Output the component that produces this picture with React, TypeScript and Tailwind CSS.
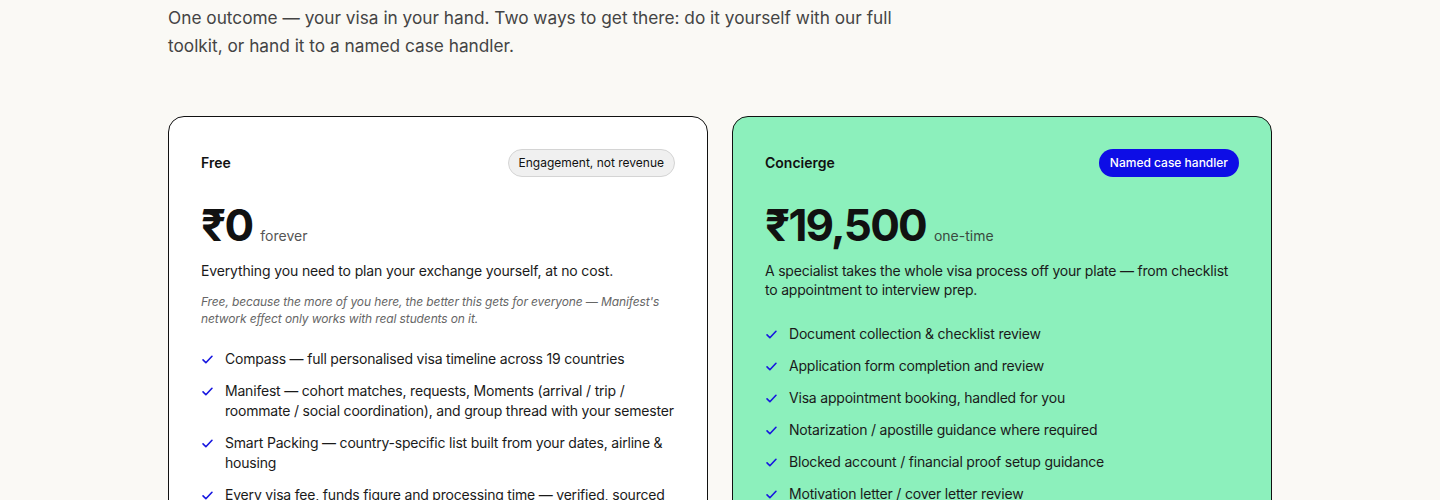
import React from "react";

const Check = () => (
  <svg
    viewBox="0 0 16 16"
    className="mt-[4px] h-[13px] w-[13px] shrink-0 text-[#1717e0]"
    fill="none"
    stroke="currentColor"
    strokeWidth={2}
    strokeLinecap="round"
    strokeLinejoin="round"
  >
    <path d="M2.5 8.5l3.5 3.5 7.5-8" />
  </svg>
);

const Feature = ({ children }: { children: React.ReactNode }) => (
  <li className="flex gap-[11px] text-[14px] leading-[20px] tracking-[-0.014em] text-[#1a1a1a]">
    <Check />
    <span>{children}</span>
  </li>
);

const App = () => {
  return (
    <div className="min-h-[500px] bg-[#faf9f5] font-['Inter',sans-serif] text-[#111]">
      <div className="mx-auto w-[1104px] pt-[4px]">
        <p className="max-w-[740px] text-[17.25px] leading-[28px] text-[#444]">
          One outcome — your visa in your hand. Two ways to get there: do it
          yourself with our full toolkit, or hand it to a named case handler.
        </p>

        <div className="mt-[56px] grid grid-cols-2 gap-6">
          {/* Free */}
          <div className="rounded-2xl border border-[#111] bg-white px-8 pt-8 pb-10">
            <div className="flex items-center justify-between">
              <h3 className="-mt-[1px] text-[14px] font-semibold">Free</h3>
              <span className="rounded-full border border-[#d4d4d4] bg-[#f0f0f0] px-[10px] py-[5px] text-[12px] leading-[16px]">
                Engagement, not revenue
              </span>
            </div>
            <div className="mt-[22px] flex items-baseline gap-2">
              <span className="text-[44px] leading-[52px] font-bold tracking-[-0.04em]">
                ₹0
              </span>
              <span className="text-[14px] text-[#555]">forever</span>
            </div>
            <p className="mt-[10px] text-[14px] leading-[20px] tracking-[-0.01em] text-[#1a1a1a]">
              Everything you need to plan your exchange yourself, at no cost.
            </p>
            <p className="mt-[12px] text-[12px] italic leading-[17px] tracking-[-0.01em] text-[#666]">
              Free, because the more of you here, the better this gets for
              everyone — Manifest's network effect only works with real students
              on it.
            </p>
            <ul className="mt-[22px] flex flex-col gap-3">
              <Feature>
                Compass — full personalised visa timeline across 19 countries
              </Feature>
              <Feature>
                Manifest — cohort matches, requests, Moments (arrival / trip /
                roommate / social coordination), and group thread with your
                semester
              </Feature>
              <Feature>
                Smart Packing — country-specific list built from your dates,
                airline &amp; housing
              </Feature>
              <Feature>
                Every visa fee, funds figure and processing time — verified,
                sourced
              </Feature>
            </ul>
          </div>

          {/* Concierge */}
          <div className="rounded-2xl border border-[#111] bg-[#8cf0bc] px-8 pt-8 pb-10">
            <div className="flex items-center justify-between">
              <h3 className="-mt-[1px] text-[14px] font-semibold">Concierge</h3>
              <span className="rounded-full bg-[#0d0de6] px-[11px] py-[6px] text-[12px] leading-[16px] font-medium text-white">
                Named case handler
              </span>
            </div>
            <div className="mt-[22px] flex items-baseline gap-2">
              <span className="text-[44px] leading-[52px] font-bold tracking-[-0.04em]">
                ₹19,500
              </span>
              <span className="text-[14px] text-[#3a4a40]">one-time</span>
            </div>
            <p className="mt-[10px] text-[14px] leading-[19px] tracking-[-0.015em] text-[#1a1a1a]">
              A specialist takes the whole visa process off your plate — from
              checklist to appointment to interview prep.
            </p>
            <ul className="mt-[25px] flex flex-col gap-3">
              <Feature>Document collection &amp; checklist review</Feature>
              <Feature>Application form completion and review</Feature>
              <Feature>Visa appointment booking, handled for you</Feature>
              <Feature>Notarization / apostille guidance where required</Feature>
              <Feature>Blocked account / financial proof setup guidance</Feature>
              <Feature>Motivation letter / cover letter review</Feature>
            </ul>
          </div>
        </div>
      </div>
    </div>
  );
};

export default App;
